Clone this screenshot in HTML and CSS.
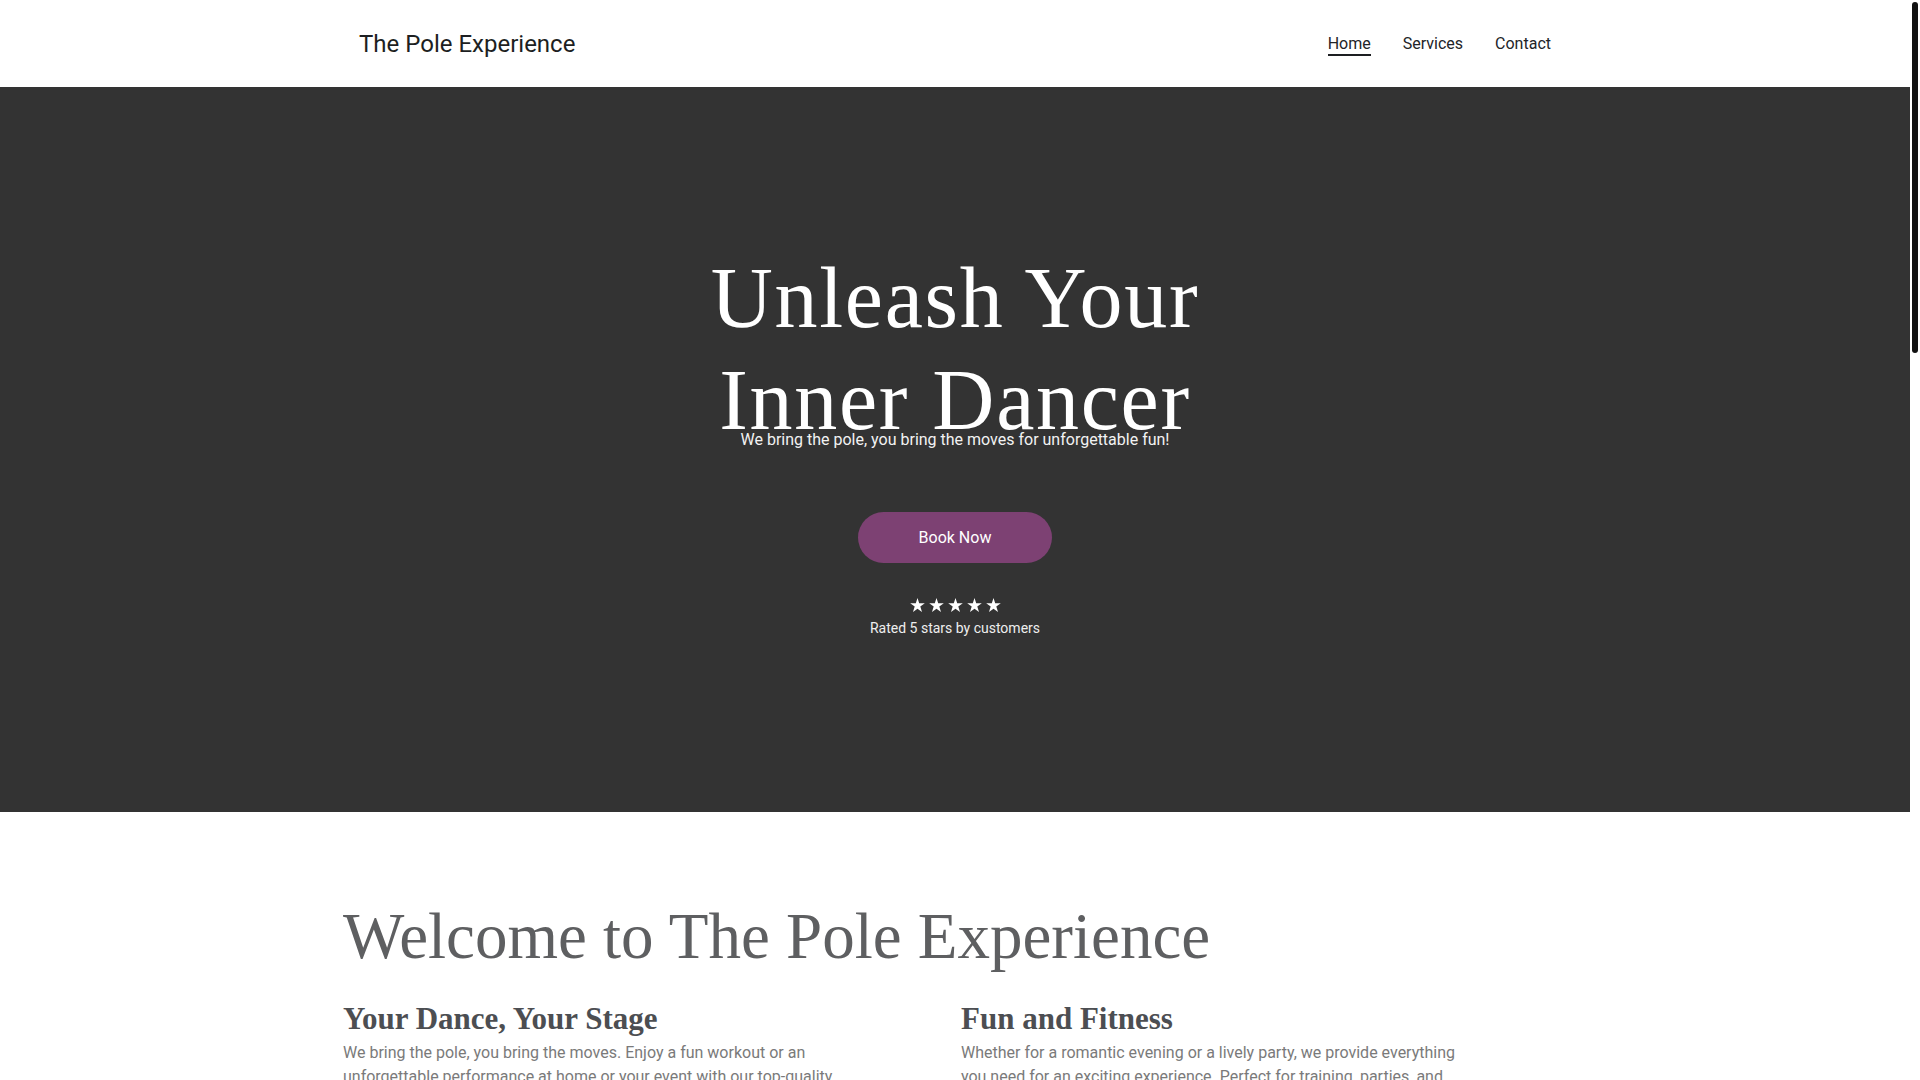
FILE: index.html
```html
<!DOCTYPE html>
<html lang="en">
<head>
<meta charset="utf-8">
<title>The Pole Experience</title>
<link rel="stylesheet" href="styles.css">
</head>
<body>
<header class="site-header">
  <div class="container header-inner">
    <a class="logo" href="#">The Pole Experience</a>
    <nav class="nav">
      <a class="nav-link active" href="#">Home</a>
      <a class="nav-link" href="#services">Services</a>
      <a class="nav-link" href="#contact">Contact</a>
    </nav>
  </div>
</header>

<section class="hero">
  <h1 class="hero-title">Unleash Your Inner Dancer</h1>
  <p class="hero-sub">We bring the pole, you bring the moves for unforgettable fun!</p>
  <a class="btn" href="#contact">Book Now</a>
  <div class="stars" aria-label="5 stars">
    <svg class="star" viewBox="0 0 24 23"><polygon points="12,0 14.8,8.6 24,8.7 16.6,14.1 19.4,22.9 12,17.5 4.6,22.9 7.4,14.1 0,8.7 9.2,8.6"/></svg>
    <svg class="star" viewBox="0 0 24 23"><polygon points="12,0 14.8,8.6 24,8.7 16.6,14.1 19.4,22.9 12,17.5 4.6,22.9 7.4,14.1 0,8.7 9.2,8.6"/></svg>
    <svg class="star" viewBox="0 0 24 23"><polygon points="12,0 14.8,8.6 24,8.7 16.6,14.1 19.4,22.9 12,17.5 4.6,22.9 7.4,14.1 0,8.7 9.2,8.6"/></svg>
    <svg class="star" viewBox="0 0 24 23"><polygon points="12,0 14.8,8.6 24,8.7 16.6,14.1 19.4,22.9 12,17.5 4.6,22.9 7.4,14.1 0,8.7 9.2,8.6"/></svg>
    <svg class="star" viewBox="0 0 24 23"><polygon points="12,0 14.8,8.6 24,8.7 16.6,14.1 19.4,22.9 12,17.5 4.6,22.9 7.4,14.1 0,8.7 9.2,8.6"/></svg>
  </div>
  <p class="rating">Rated 5 stars by customers</p>
</section>

<section class="welcome">
  <div class="container">
    <h2 class="section-title">Welcome to The Pole Experience</h2>
    <div class="cols">
      <div class="col">
        <h3 class="col-title">Your Dance, Your Stage</h3>
        <p class="col-text">We bring the pole, you bring the moves. Enjoy a fun workout or an unforgettable performance at home or your event with our top-quality portable poles.</p>
      </div>
      <div class="col">
        <h3 class="col-title">Fun and Fitness</h3>
        <p class="col-text">Whether for a romantic evening or a lively party, we provide everything you need for an exciting experience. Perfect for training, parties, and special occasions.</p>
      </div>
    </div>
  </div>
</section>

<section class="more" id="services">
  <div class="container">
    <h2 class="section-title">Our Services</h2>
    <div class="cols">
      <div class="col">
        <h3 class="col-title">Pole Rental</h3>
        <p class="col-text">Professional portable poles delivered, installed and collected at a time that suits you.</p>
      </div>
      <div class="col">
        <h3 class="col-title">Party Packages</h3>
        <p class="col-text">Hen parties, birthdays and celebrations with music, lights and a whole lot of fun.</p>
      </div>
    </div>
  </div>
</section>

<section class="more" id="contact">
  <div class="container">
    <h2 class="section-title">Contact</h2>
    <p class="col-text">Get in touch to book your pole and plan your unforgettable experience.</p>
  </div>
</section>

<footer class="footer">
  <div class="container">© The Pole Experience</div>
</footer>

<div class="scrollbar" aria-hidden="true"><div class="scrollbar-thumb"></div></div>
</body>
</html>
```

FILE: styles.css
```css
* {
  box-sizing: border-box;
}

body {
  margin: 0 10px 0 0;
  background: #ffffff;
  font-family: Roboto, "Liberation Sans", Arial, sans-serif;
  color: #222222;
}

a {
  text-decoration: none;
  color: inherit;
}

.container {
  width: 1224px;
  margin: 0 auto;
}

/* Header */
.site-header {
  height: 87px;
  background: #ffffff;
}

.header-inner {
  height: 100%;
  padding: 0 16px;
  display: flex;
  align-items: center;
  justify-content: space-between;
}

.logo {
  font-family: Roboto, "Liberation Sans", sans-serif;
  font-size: 24px;
  line-height: 28px;
  color: #1d1f22;
}

.nav {
  display: flex;
  gap: 32px;
  margin-top: 3px;
}

.nav-link {
  display: block;
  font-size: 16px;
  line-height: 19px;
  padding-bottom: 1px;
  border-bottom: 2px solid transparent;
  color: #222428;
}

.nav-link.active {
  border-bottom-color: #1d1f22;
}

/* Hero */
.hero {
  height: 725px;
  background: #333333;
  padding-top: 160px;
  display: flex;
  flex-direction: column;
  align-items: center;
  text-align: center;
  color: #ffffff;
}

.hero-title {
  margin: 0;
  max-width: 640px;
  font-family: "Liberation Serif", "Times New Roman", serif;
  font-weight: 400;
  font-size: 86px;
  line-height: 102px;
  letter-spacing: 1.7px;
  color: #ffffff;
}

.hero-sub {
  margin: -23px 0 0;
  font-size: 16px;
  line-height: 24px;
  color: #f2f2f2;
}

.btn {
  margin-top: 60px;
  width: 194px;
  height: 51px;
  border-radius: 26px;
  background: #7d4173;
  color: #ffffff;
  font-size: 16px;
  display: flex;
  align-items: center;
  justify-content: center;
}

.stars {
  margin-top: 35px;
  display: flex;
  gap: 4px;
  height: 14px;
}

.star {
  width: 15px;
  height: 14px;
  fill: #ffffff;
}

.rating {
  margin: 6px 0 0;
  font-size: 14px;
  line-height: 20px;
  color: #eeeeee;
}

/* Welcome */
.welcome {
  padding-top: 85px;
  padding-bottom: 120px;
}

.section-title {
  margin: 0;
  font-family: "Liberation Serif", "Times New Roman", serif;
  font-weight: 400;
  font-size: 65px;
  line-height: 78px;
  color: #5e5f61;
}

.cols {
  margin-top: 25px;
  display: grid;
  grid-template-columns: 1fr 1fr;
  column-gap: 12px;
}

.col-title {
  margin: 0;
  font-family: "Liberation Serif", "Times New Roman", serif;
  font-weight: 700;
  font-size: 31px;
  line-height: 37px;
  color: #4c4e52;
}

.col-text {
  margin: 4px 0 0;
  max-width: 505px;
  font-size: 16px;
  line-height: 24px;
  color: #7a7a7a;
}

.more {
  padding: 120px 0 360px;
}

.footer {
  padding: 60px 0 400px;
  background: #333333;
  color: #cccccc;
  font-size: 14px;
}

/* Scrollbar overlay (matches the browser scrollbar in the screenshot) */
.scrollbar {
  position: fixed;
  top: 0;
  right: 0;
  width: 10px;
  height: 100vh;
  background: #ffffff;
}

.scrollbar-thumb {
  margin: 2px 2px 0;
  height: 351px;
  border-radius: 3px;
  background: #111111;
}
```
